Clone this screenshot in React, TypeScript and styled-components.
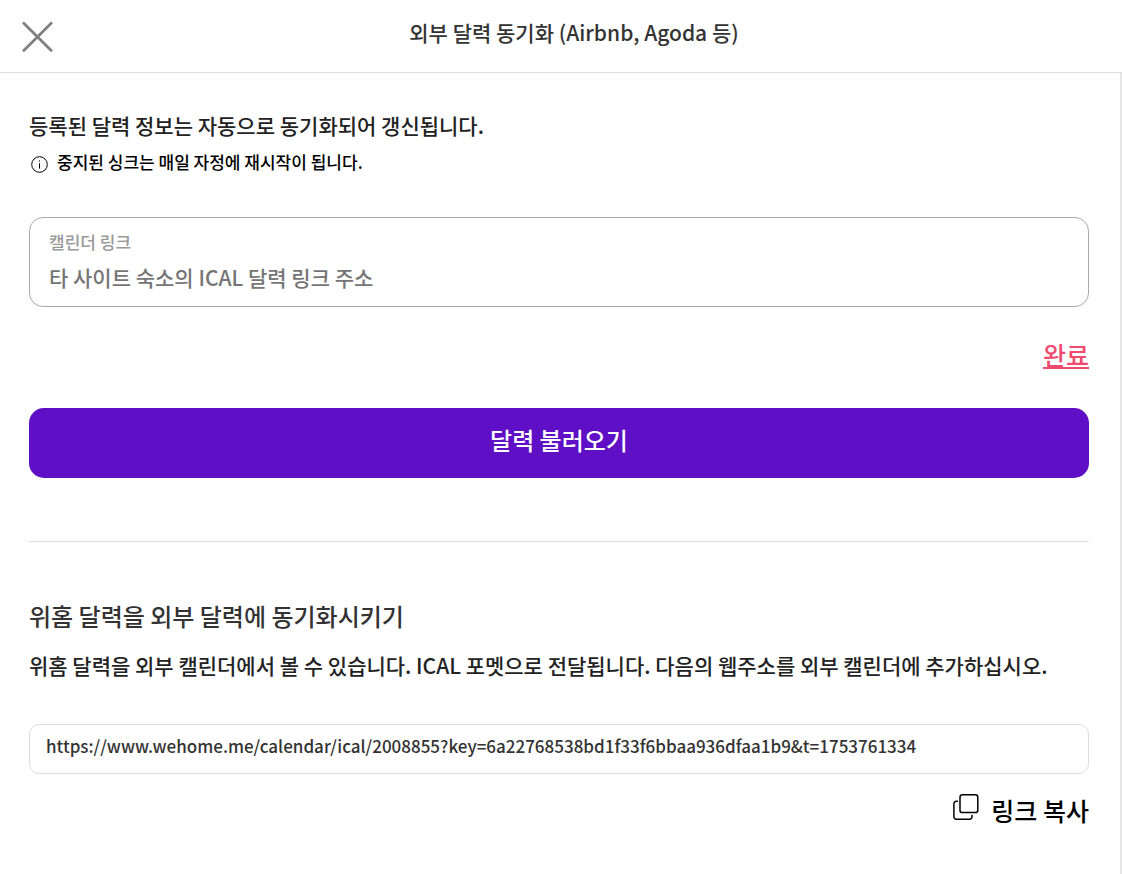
import React, { useState } from "react";
import styled, { createGlobalStyle } from "styled-components";

const GlobalStyle = createGlobalStyle`
  *, *::before, *::after { box-sizing: border-box; }
  body {
    margin: 0;
    background: #ffffff;
    color: #222222;
    font-family: "Noto Sans CJK KR", "Noto Sans", sans-serif;
    font-weight: 500;
  }
  button, input { font: inherit; }
`;

const Page = styled.div`
  display: flex;
  flex-direction: column;
  min-height: 100vh;
`;

const Header = styled.header`
  display: grid;
  grid-template-columns: 56px 1fr 56px;
  align-items: center;
  height: 73px;
  padding: 0 6px 0 10px;
  border-bottom: 1px solid #dddddd;
`;

const CloseButton = styled.button`
  display: flex;
  justify-content: center;
  padding: 2px 0 0;
  border: 0;
  background: none;
  cursor: pointer;
`;

const Title = styled.h1`
  margin: 0;
  padding: 0 0 8px 22px;
  color: #333333;
  font-size: 21px;
  font-weight: 500;
  line-height: 30px;
  text-align: center;
`;

const Content = styled.main`
  flex: 1;
  padding: 37px 31px 40px 29px;
  border-right: 2px solid #e6e6e6;
`;

const Text = styled.p`
  margin: 0;
  font-size: 21px;
  line-height: 30px;
`;

const Notice = styled.p`
  display: flex;
  align-items: flex-end;
  gap: 9px;
  margin: 9px 0 43px;
  padding-left: 2px;
  color: #000000;
  font-size: 17px;
  line-height: 25px;
  & > svg { margin-bottom: 1px; }
`;

const Field = styled.label`
  display: flex;
  flex-direction: column;
  height: 90px;
  padding: 12px 19px;
  border: 1px solid #aaaaaa;
  border-radius: 14px;
`;

const FieldName = styled.span`
  color: #999999;
  font-size: 17px;
  line-height: 24px;
`;

const FieldInput = styled.input`
  width: 100%;
  height: 32px;
  margin-top: 7px;
  padding: 0;
  border: 0;
  outline: 0;
  background: transparent;
  color: #222222;
  font-size: 21px;
  &::placeholder { color: #757575; opacity: 1; }
`;

const Actions = styled.div`
  display: flex;
  justify-content: flex-end;
`;

const DoneButton = styled.button`
  margin: 28px 0 35px;
  padding: 0;
  border: 0;
  background: none;
  color: #f04a6e;
  font-size: 25px;
  line-height: 38px;
  text-decoration: underline;
  cursor: pointer;
`;

const PrimaryButton = styled.button`
  display: block;
  width: 100%;
  height: 70px;
  padding: 0 0 8px;
  border: 0;
  border-radius: 15px;
  background: #5f0fc5;
  color: #ffffff;
  font-size: 24px;
  cursor: pointer;
`;

const Divider = styled.hr`
  height: 1px;
  margin: 63px 0 56px;
  border: 0;
  background: #dddddd;
`;

const SectionTitle = styled.h2`
  margin: 0 0 16px;
  color: #333333;
  font-size: 24px;
  font-weight: 500;
  line-height: 36px;
`;

const LinkInput = styled.input`
  display: block;
  width: 100%;
  height: 50px;
  margin: 44px 0 17px;
  padding: 0 16px 8px;
  border: 1px solid #dddddd;
  border-radius: 10px;
  outline: 0;
  background: #ffffff;
  color: #333333;
  font-size: 17px;
`;

const CopyButton = styled.button`
  display: flex;
  gap: 12px;
  padding: 0;
  border: 0;
  background: none;
  color: #000000;
  font-size: 25px;
  line-height: 38px;
  cursor: pointer;
  & > svg { margin-top: 3px; }
`;

const CloseIcon = () => (
  <svg width="32" height="32" viewBox="0 0 32 32" fill="none" stroke="#808080" strokeWidth="2.8" strokeLinecap="round" aria-hidden="true">
    <path d="M1.8 2.2 29.2 29.6M29.2 2.2 1.8 29.6" />
  </svg>
);

const InfoIcon = () => (
  <svg width="17" height="17" viewBox="0 0 17 17" fill="none" stroke="#000000" aria-hidden="true">
    <circle cx="8.5" cy="8.5" r="7.8" strokeWidth="1" />
    <path d="M8.5 7.2V12.6" strokeWidth="1" />
    <circle cx="8.5" cy="4.9" r="0.6" fill="#000000" stroke="none" />
  </svg>
);

const CopyIcon = () => (
  <svg width="26" height="27" viewBox="0 0 26 27" fill="none" stroke="#000000" strokeWidth="1.5" strokeLinecap="round" aria-hidden="true">
    <rect x="7" y="0.8" width="17.8" height="17.8" rx="2.4" />
    <path d="M4.4 7.2H3.4A2.5 2.5 0 0 0 0.9 9.7V22.8A2.4 2.4 0 0 0 3.3 25.2H16.6A2.4 2.4 0 0 0 19 22.8V21.6" />
  </svg>
);

const CALENDAR_URL =
  "https://www.wehome.me/calendar/ical/2008855?key=6a22768538bd1f33f6bbaa936dfaa1b9&t=1753761334";

export default function App() {
  const [link, setLink] = useState("");
  return (
    <Page>
      <GlobalStyle />
      <Header>
        <CloseButton type="button" aria-label="닫기">
          <CloseIcon />
        </CloseButton>
        <Title>외부 달력 동기화 (Airbnb, Agoda 등)</Title>
      </Header>
      <Content>
        <Text>등록된 달력 정보는 자동으로 동기화되어 갱신됩니다.</Text>
        <Notice>
          <InfoIcon />
          중지된 싱크는 매일 자정에 재시작이 됩니다.
        </Notice>
        <Field>
          <FieldName>캘린더 링크</FieldName>
          <FieldInput
            type="url"
            value={link}
            onChange={(event) => setLink(event.target.value)}
            placeholder="타 사이트 숙소의 ICAL 달력 링크 주소"
          />
        </Field>
        <Actions>
          <DoneButton type="button">완료</DoneButton>
        </Actions>
        <PrimaryButton type="button">달력 불러오기</PrimaryButton>
        <Divider />
        <SectionTitle>위홈 달력을 외부 달력에 동기화시키기</SectionTitle>
        <Text>
          위홈 달력을 외부 캘린더에서 볼 수 있습니다. ICAL 포멧으로 전달됩니다. 다음의 웹주소를 외부 캘린더에 추가하십시오.
        </Text>
        <LinkInput type="text" readOnly value={CALENDAR_URL} aria-label="위홈 달력 주소" />
        <Actions>
          <CopyButton type="button" onClick={() => navigator.clipboard?.writeText(CALENDAR_URL)}>
            <CopyIcon />
            링크 복사
          </CopyButton>
        </Actions>
      </Content>
    </Page>
  );
}
